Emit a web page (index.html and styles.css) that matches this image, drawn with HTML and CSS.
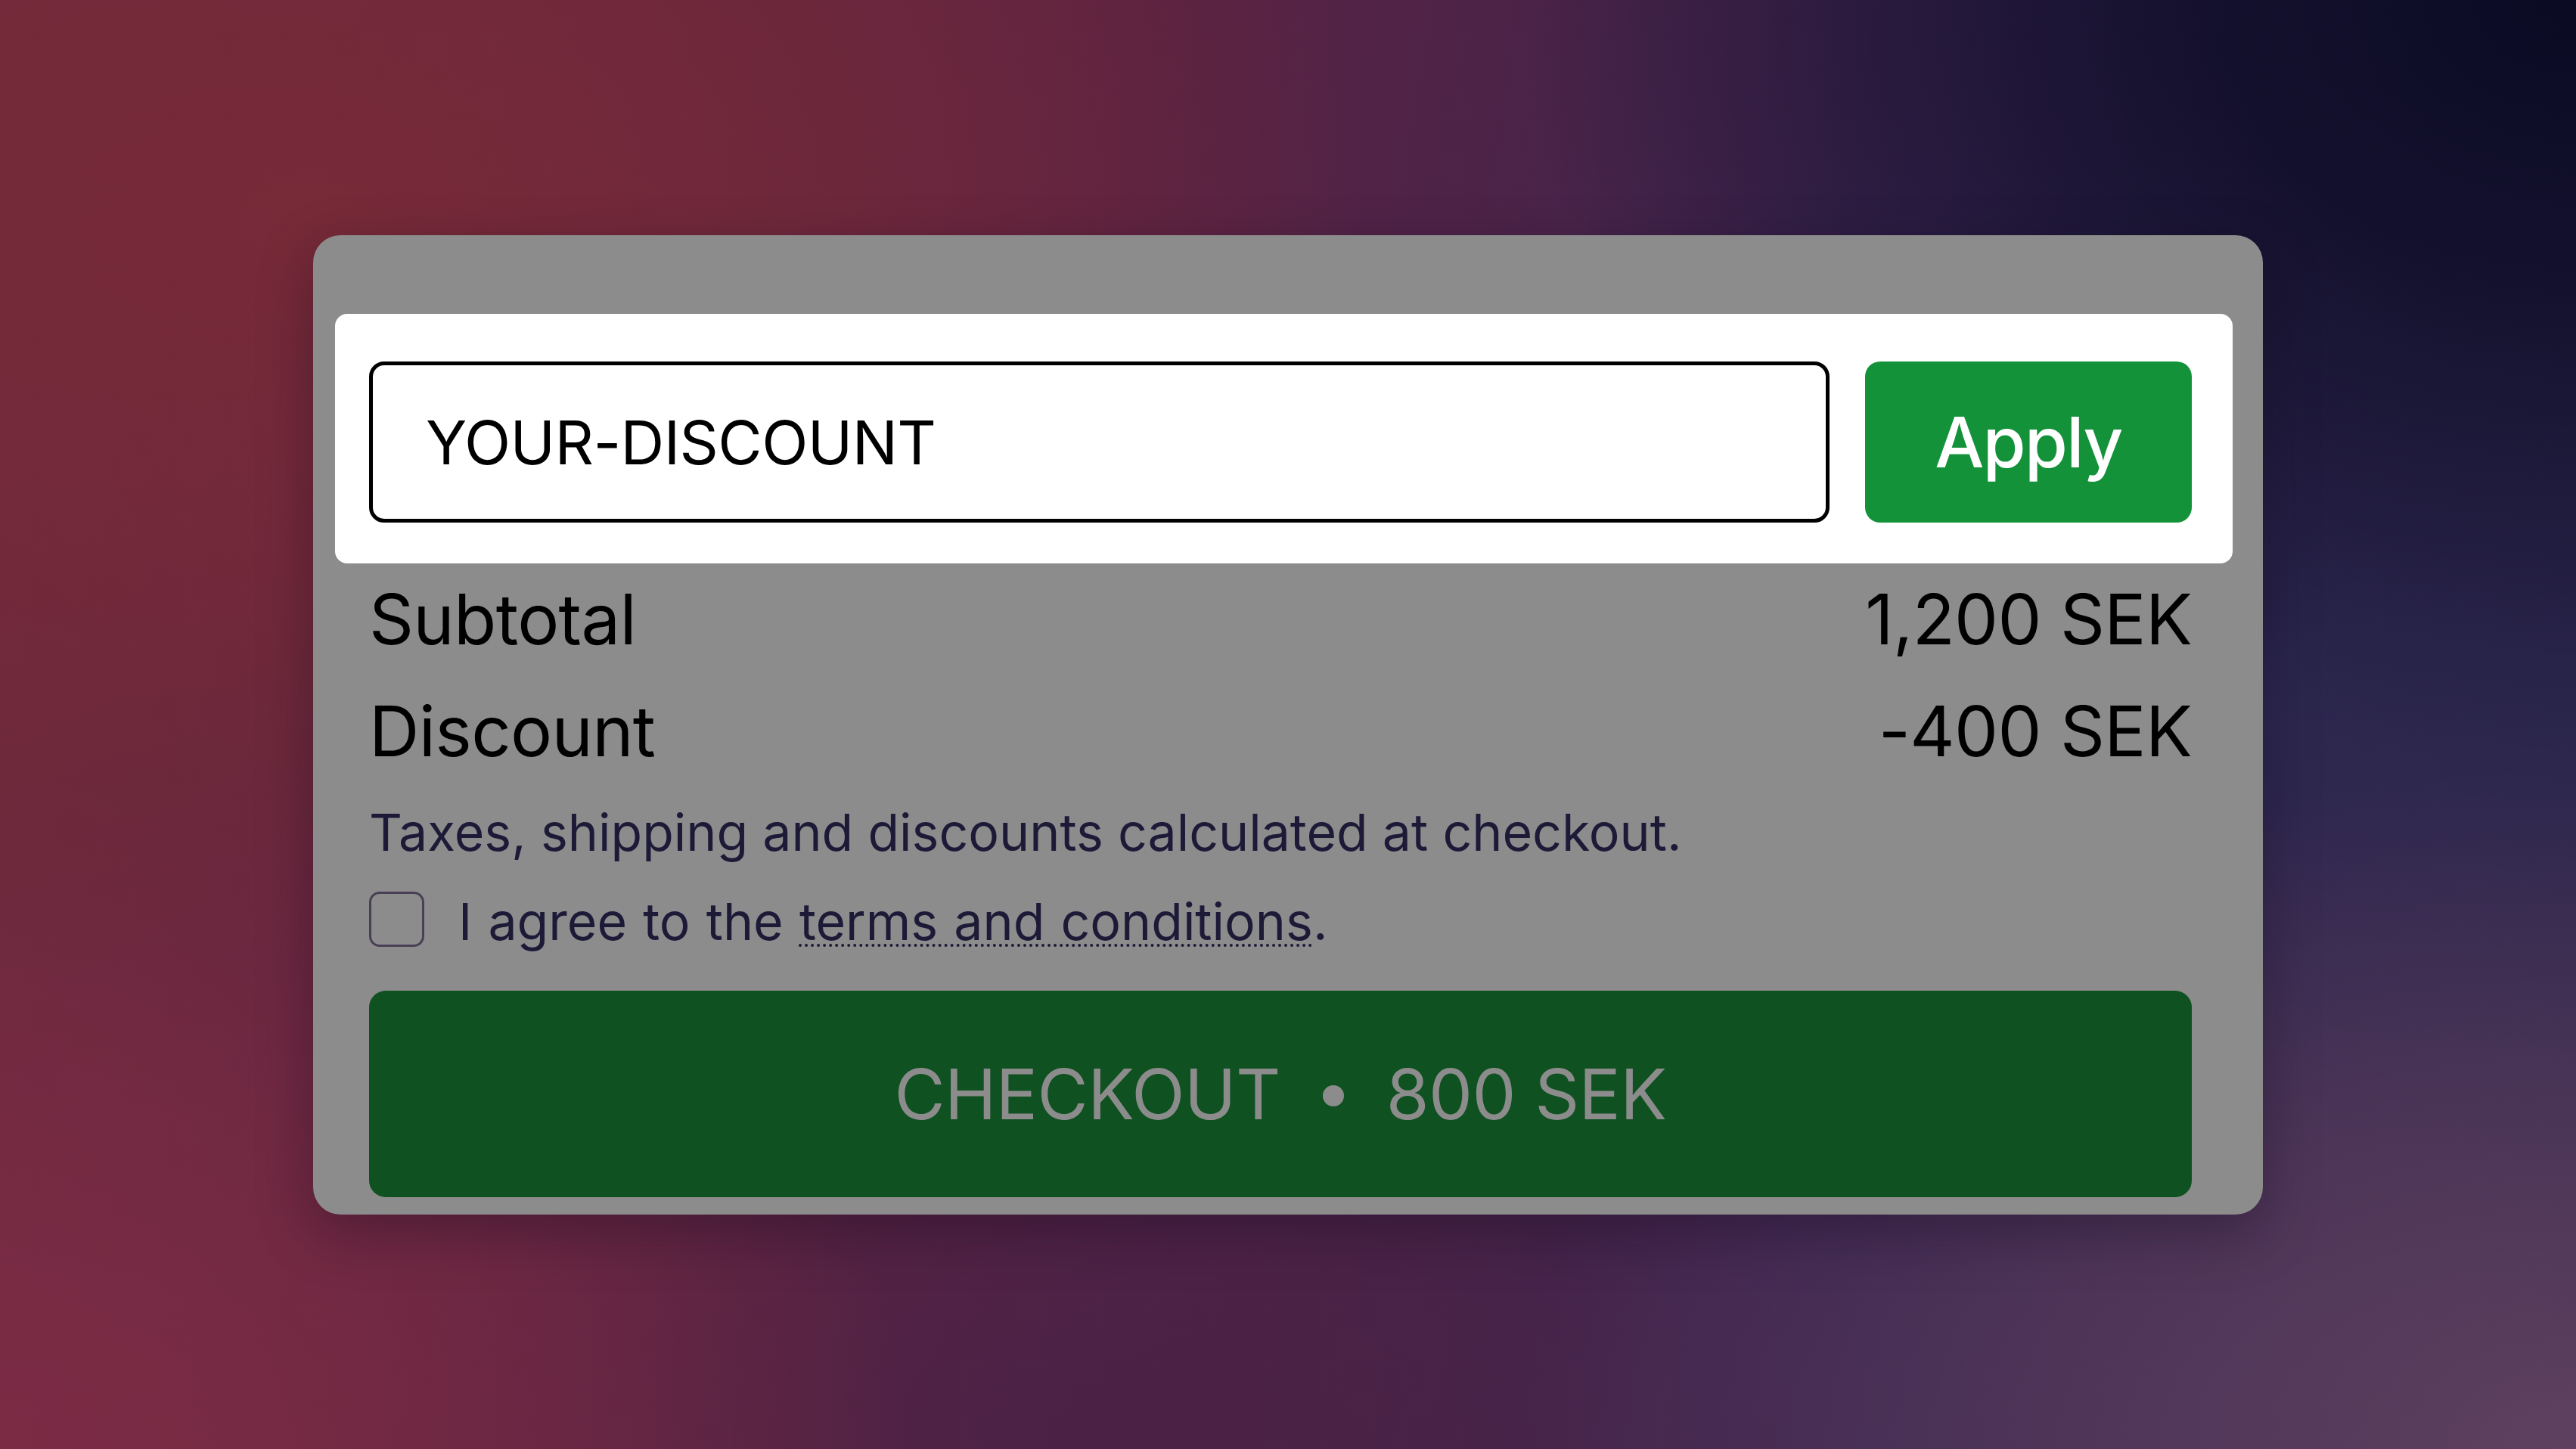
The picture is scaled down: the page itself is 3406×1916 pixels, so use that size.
FILE: index.html
```html
<!DOCTYPE html>
<html lang="en">
<head>
<meta charset="utf-8">
<title>Cart summary</title>
<link rel="stylesheet" href="styles.css">
</head>
<body>
<main class="stage">
  <section class="card">
    <div class="promo">
      <div class="promo-input">YOUR-DISCOUNT</div>
      <button class="apply-btn" type="button">Apply</button>
    </div>
    <div class="row">
      <span>Subtotal</span>
      <span>1,200 SEK</span>
    </div>
    <div class="row">
      <span>Discount</span>
      <span>-400 SEK</span>
    </div>
    <p class="note">Taxes, shipping and discounts calculated at checkout.</p>
    <label class="agree">
      <span class="checkbox"></span>
      <span class="agree-text">I agree to the <span class="terms">terms and conditions</span>.</span>
    </label>
    <button class="checkout-btn" type="button">
      <span>CHECKOUT</span>
      <span class="bullet"></span>
      <span>800 SEK</span>
    </button>
  </section>
</main>
</body>
</html>
```

FILE: styles.css
```css
html, body {
  margin: 0;
  padding: 0;
}

body {
  width: 3406px;
  height: 1916px;
  overflow: hidden;
  font-family: "Inter", "Noto Sans", sans-serif;
  background-color: #4a2a4a;
  background-image:
    radial-gradient(ellipse 1400px 1000px at 100% 0%, #0b0b24 0%, rgba(14, 13, 40, 0.85) 35%, rgba(20, 18, 50, 0) 100%),
    radial-gradient(ellipse 1400px 1000px at 12% 15%, #772a38 0%, rgba(119, 42, 56, 0.6) 50%, rgba(119, 42, 56, 0) 100%),
    radial-gradient(ellipse 1200px 900px at 0% 100%, #7c2b45 0%, rgba(124, 43, 69, 0.5) 55%, rgba(124, 43, 69, 0) 100%),
    radial-gradient(ellipse 1400px 900px at 100% 100%, #5f4060 0%, rgba(95, 64, 96, 0.6) 50%, rgba(95, 64, 96, 0) 100%),
    radial-gradient(ellipse 1000px 600px at 45% 100%, #4a2246 0%, rgba(74, 34, 70, 0) 100%),
    radial-gradient(ellipse 1200px 700px at 85% 45%, #2c2850 0%, rgba(44, 40, 80, 0) 100%),
    linear-gradient(100deg, #6e2a3c 0%, #5a2242 40%, #3c2550 70%, #2a2548 100%);
}

.stage {
  width: 100%;
  height: 100%;
  display: flex;
  align-items: center;
  justify-content: center;
}

.card {
  width: 2578px;
  height: 1295px;
  box-sizing: border-box;
  padding: 104px 94px 22px 74px;
  background: #8c8c8c;
  border-radius: 36px;
  box-shadow: 0 24px 70px rgba(20, 8, 30, 0.35);
  display: flex;
  flex-direction: column;
}

.promo {
  margin: 0 -54px 0 -45px;
  padding: 63px 54px 54px 45px;
  background: #ffffff;
  border-radius: 16px;
  display: flex;
  gap: 47px;
}

.promo-input {
  flex: 1;
  height: 213px;
  box-sizing: border-box;
  border: 5px solid #000000;
  border-radius: 20px;
  padding-left: 70px;
  display: flex;
  align-items: center;
  font-size: 80px;
  letter-spacing: -0.6px;
  color: #000000;
  background: #ffffff;
}

.apply-btn {
  width: 432px;
  height: 213px;
  border: none;
  border-radius: 20px;
  background: #13923a;
  color: #ffffff;
  font-family: "Inter", "Noto Sans", sans-serif;
  font-size: 92px;
  font-weight: 500;
  letter-spacing: -1.6px;
  padding: 0;
}

.row {
  display: flex;
  justify-content: space-between;
  font-size: 92px;
  line-height: 148px;
  letter-spacing: -0.7px;
  color: #000000;
}

.note {
  margin: 0;
  font-size: 68px;
  line-height: 118px;
  color: #1d1a38;
}

.agree {
  display: flex;
  align-items: center;
  height: 118px;
  font-size: 68px;
  color: #1d1a38;
}

.checkbox {
  width: 73px;
  height: 73px;
  box-sizing: border-box;
  border: 3px solid #4a4055;
  border-radius: 14px;
  margin-right: 45px;
  margin-top: -4px;
}

.agree-text {
  word-spacing: 2px;
}

.terms {
  text-decoration: underline dotted;
  text-decoration-thickness: 4px;
  text-underline-offset: 6px;
}

.checkout-btn {
  margin-top: 33px;
  height: 273px;
  border: none;
  border-radius: 22px;
  background: #0f5120;
  color: #8c8c8c;
  font-family: "Inter", "Noto Sans", sans-serif;
  font-size: 92px;
  font-weight: 400;
  letter-spacing: -0.6px;
  display: flex;
  align-items: center;
  justify-content: center;
  gap: 56px;
  padding: 0;
}

.bullet {
  width: 28px;
  height: 28px;
  border-radius: 50%;
  background: #8c8c8c;
  margin-top: 6px;
}
```
